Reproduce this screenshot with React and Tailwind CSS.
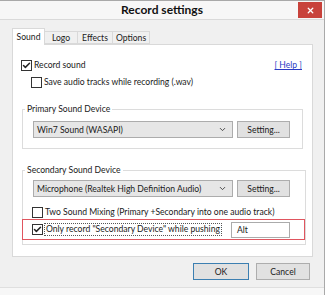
import { Check, X, ChevronDown } from 'lucide-react'

function CheckBox({ checked }) {
  return (
    <span className="flex h-[11px] w-[11px] shrink-0 items-center justify-center border border-[#333333] bg-white">
      {checked && <Check className="h-[9px] w-[9px] text-[#222222]" strokeWidth={4} />}
    </span>
  )
}

function Combo({ text }) {
  return (
    <div className="flex h-[17px] w-[200px] items-center justify-between border border-[#acacac] bg-[#e6e6e6] pl-[3px] pr-[5px]">
      <span>{text}</span>
      <ChevronDown className="h-[9px] w-[9px] text-[#444444]" strokeWidth={2.5} />
    </div>
  )
}

function Button({ children, className = '' }) {
  return (
    <button className={`flex h-[17px] items-center justify-center border bg-[#e1e1e1] ${className}`}>
      {children}
    </button>
  )
}

function Group({ label, children, className = '' }) {
  return (
    <fieldset className={`ml-[9px] w-[281px] border border-[#dcdcdc] ${className}`}>
      <legend className="ml-[2px] px-[2px] leading-[10px]">{label}</legend>
      {children}
    </fieldset>
  )
}

export default function App() {
  return (
    <div
      className="relative flex h-[295px] w-[325px] flex-col overflow-hidden border-t border-r border-[#a9a9a9] bg-[#f0f0f0] text-[8.6px] leading-[12px] whitespace-nowrap text-[#1a1a1a]"
      style={{ fontFamily: 'Lato, "Noto Sans", sans-serif' }}
    >
      <div className="relative flex h-[19px] items-center justify-center border-b border-[#dadada] bg-[#f7f7f7]">
        <span className="text-[12px] font-bold text-[#111111]">Record settings</span>
        <div className="absolute top-[1px] right-[2px] flex h-[16px] w-[24px] items-center justify-center bg-[#c8423b]">
          <X className="h-[9px] w-[9px] text-white" strokeWidth={3.5} />
        </div>
      </div>

      <div className="flex flex-col px-[12px] pt-[8px]">
        <div className="flex items-end">
          <div className="z-10 -mb-px flex h-[17px] w-[33px] items-center justify-center border border-b-0 border-[#d9d9d9] bg-white pb-[1px]">
            Sound
          </div>
          <div className="flex h-[13px] w-[33px] items-center justify-center border border-l-0 border-[#d9d9d9] bg-[#f0f0f0]">Logo</div>
          <div className="flex h-[13px] w-[35px] items-center justify-center border border-l-0 border-[#d9d9d9] bg-[#f0f0f0]">Effects</div>
          <div className="flex h-[13px] w-[37px] items-center justify-center border border-l-0 border-[#d9d9d9] bg-[#f0f0f0]">Options</div>
        </div>

        <div className="flex h-[213px] w-[301px] flex-col border border-[#d9d9d9] bg-white">
          <div className="mt-[14px] flex items-center pr-[10px] pl-[8px]">
            <CheckBox checked />
            <span className="ml-[2px]">Record sound</span>
            <span className="ml-auto text-[#2a3cc4] underline">[ Help ]</span>
          </div>
          <div className="mt-[5px] flex items-center pl-[18px]">
            <CheckBox />
            <span className="ml-[2px]">Save audio tracks while recording (.wav)</span>
          </div>

          <Group label="Primary Sound Device" className="mt-[16px] h-[45px]">
            <div className="mt-[7px] flex items-center gap-[4px] pl-[10px]">
              <Combo text="Win7 Sound (WASAPI)" />
              <Button className="w-[53px] border-[#adadad]">Setting...</Button>
            </div>
          </Group>

          <Group label="Secondary Sound Device" className="mt-[16px] h-[80px]">
            <div className="mt-[5px] flex items-center gap-[4px] pl-[10px]">
              <Combo text="Microphone (Realtek High Definition Audio)" />
              <Button className="w-[53px] border-[#adadad]">Setting...</Button>
            </div>
            <div className="mt-[9px] flex items-center pl-[9px]">
              <CheckBox />
              <span className="ml-[2px]">Two Sound Mixing (Primary +Secondary into one audio track)</span>
            </div>
            <div className="-ml-px mt-[1px] flex h-[21px] w-[283px] items-center border border-[#e0555f] pl-[9px]">
              <CheckBox checked />
              <span className="ml-[1px] border border-dotted border-[#555555] px-[1px] leading-[11px]">
                Only record "Secondary Device" while pushing
              </span>
              <div className="ml-auto mr-[14px] flex h-[16px] w-[59px] items-center border border-[#ababab] bg-white pl-[5px]">Alt</div>
            </div>
          </Group>
        </div>
      </div>

      <div className="mt-[6px] flex gap-[7px] pl-[193px]">
        <Button className="w-[56px] border-[#3c7fb1]">OK</Button>
        <Button className="w-[54px] border-[#adadad]">Cancel</Button>
      </div>
      <div className="mt-auto h-[8px] border-t border-[#dfdfdf] bg-[#f7f7f7]" />
    </div>
  )
}
